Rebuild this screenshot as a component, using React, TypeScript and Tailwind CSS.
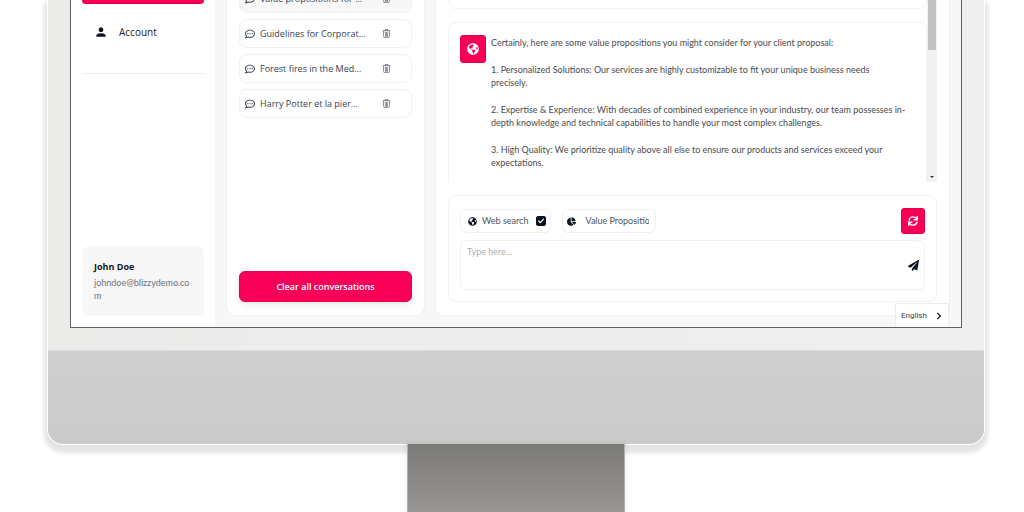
import type { ReactNode } from 'react'
import { BsTrash3 } from 'react-icons/bs'
import { FaChartPie, FaCheck, FaChevronRight, FaGlobeAmericas, FaPaperPlane, FaRegCommentDots, FaSync } from 'react-icons/fa'
import { MdPerson } from 'react-icons/md'

const conversations = [
  { title: 'Value propositions for ...', active: true },
  { title: 'Guidelines for Corporat...', active: false },
  { title: 'Forest fires in the Med...', active: false },
  { title: 'Harry Potter et la pier...', active: false },
]

const answer = [
  'Certainly, here are some value propositions you might consider for your client proposal:',
  '1. Personalized Solutions: Our services are highly customizable to fit your unique business needs precisely.',
  '2. Expertise & Experience: With decades of combined experience in your industry, our team possesses in-depth knowledge and technical capabilities to handle your most complex challenges.',
  '3. High Quality: We prioritize quality above all else to ensure our products and services exceed your expectations.',
]

const Sidebar = () => (
  <aside className="flex w-36 shrink-0 flex-col bg-white px-[11px] pb-[11px]">
    <div className="h-1 rounded-b-md border-b border-[#dc0032] bg-[#f90058]" />
    <a href="#account" className="mt-5 flex h-4 items-center gap-[11px] pl-3 text-[10px] text-[#1f2328]">
      <MdPerson size={14} className="text-[#0b1220]" />
      Account
    </a>
    <hr className="mt-[33px] border-[#ededed]" />
    <div className="mt-auto rounded-lg bg-[#f7f7f7] px-3 py-[14px]">
      <p className="text-[9px] leading-[14px] font-bold text-[#111827]">John Doe</p>
      <p className="mt-[2px] font-['Lato',sans-serif] text-[9px] leading-[13px] break-all text-[#6b7280]">johndoe@blizzydemo.com</p>
    </div>
  </aside>
)

const ConversationList = () => (
  <section className="flex w-[197px] shrink-0 flex-col rounded-b-lg bg-white px-3 pb-[13px] shadow-[0_0_2px_rgba(0,0,0,0.08)]">
    <ul className="-mt-4 flex flex-col gap-[6px]">
      {conversations.map(({ title, active }) => (
        <li
          key={title}
          className={`flex h-[29px] items-center rounded-lg border border-[#f0f0f0] pr-5 pl-[5px] text-[#374151] ${active ? 'bg-[#f7f7f7]' : 'bg-white'}`}
        >
          <button className="flex flex-1 items-center gap-[5px] text-left text-[9px] whitespace-nowrap">
            <FaRegCommentDots size={10} />
            {title}
          </button>
          <button aria-label={`Delete ${title}`}>
            <BsTrash3 size={9} />
          </button>
        </li>
      ))}
    </ul>
    <button className="mt-auto h-[31px] rounded-md border border-[#ee0045] bg-[#f90058] text-[9px] font-semibold text-white shadow-[0_2px_8px_rgba(0,0,0,0.1)]">
      Clear all conversations
    </button>
  </section>
)

const Messages = () => (
  <div className="flex">
    <div className="min-w-0 flex-1">
      <div className="h-[9px] rounded-b-lg border border-t-0 border-[#f2f2f2]" />
      <article className="mt-[13px] flex gap-[5px] rounded-t-lg border border-b-0 border-[#f2f2f2] pt-3 pr-5 pb-[13px] pl-[11px]">
        <div className="flex h-7 w-[26px] shrink-0 items-center justify-center rounded-[3px] border border-[#e6003f] bg-[#f90058] text-white">
          <FaGlobeAmericas size={12} />
        </div>
        <div className="flex flex-col gap-[14px] pt-[1px] font-['Lato',sans-serif] text-[9px] leading-[13px] text-[#4b4b4b]">
          {answer.map((paragraph) => (
            <p key={paragraph}>{paragraph}</p>
          ))}
        </div>
      </article>
    </div>
    <div className="flex w-[10px] flex-col items-center justify-between bg-[#f1f1f1]">
      <div className="h-[50px] w-2 bg-[#c1c1c1]" />
      <div className="mb-1 border-x-2 border-t-2 border-x-transparent border-t-[#333]" />
    </div>
  </div>
)

const Pill = ({ children }: { children: ReactNode }) => (
  <div className="flex h-6 items-center rounded-md border border-[#f0f0f0] text-[9px] text-[#4b5563]">{children}</div>
)

const Composer = () => (
  <form className="mt-[13px] rounded-lg border border-[#f2f2f2] px-[11px] pt-3 pb-[11px] font-['Lato',sans-serif]">
    <div className="flex items-center gap-[11px]">
      <Pill>
        <label htmlFor="web-search" className="flex items-center gap-[5px] pl-[7px]">
          <FaGlobeAmericas size={9} className="text-[#0b1220]" />
          Web search
        </label>
        <span className="relative mr-1 ml-2 flex">
          <input
            id="web-search"
            type="checkbox"
            defaultChecked
            className="peer size-[10px] appearance-none rounded-[2px] border border-[#0b1220] checked:bg-[#0b1220]"
          />
          <FaCheck size={6} className="pointer-events-none absolute inset-0 m-auto hidden text-white peer-checked:block" />
        </span>
      </Pill>
      <Pill>
        <FaChartPie size={9} className="mr-[9px] ml-1 text-[#0b1220]" />
        <select aria-label="Template" className="mr-[6px] w-16 appearance-none bg-transparent outline-none">
          <option>Value Propositions</option>
        </select>
      </Pill>
      <button
        type="button"
        aria-label="Regenerate"
        className="ml-auto flex h-[26px] w-6 items-center justify-center rounded-[3px] border border-[#e6003f] bg-[#f90058] text-white"
      >
        <FaSync size={10} />
      </button>
    </div>
    <div className="mt-[6px] flex h-[50px] rounded-md border border-[#f0f0f0] pl-[6px]">
      <textarea
        aria-label="Message"
        placeholder="Type here..."
        className="min-w-0 flex-1 resize-none pt-1 text-[9px] leading-[13px] outline-none placeholder:text-[#aeaeae]"
      />
      <button type="submit" aria-label="Send" className="pr-[5px] text-[#0b1220]">
        <FaPaperPlane size={11} />
      </button>
    </div>
  </form>
)

const LanguageSwitch = () => (
  <button className="absolute right-3 bottom-0 flex h-6 w-[54px] items-center justify-between border border-b-0 border-[#ececec] bg-white px-[5px] font-['Roboto',sans-serif] text-[8px] text-[#444]">
    English
    <FaChevronRight size={8} className="text-[#111]" />
  </button>
)

const App = () => (
  <div className="flex min-h-screen flex-col overflow-hidden bg-white pr-[39px] pl-[47px] font-['Open_Sans','Noto_Sans',sans-serif]">
    <div className="relative rounded-b-2xl border border-t-0 border-white bg-[#cdcdcd] shadow-[0_5px_4px_3px_rgba(0,0,0,0.11)]">
      <div className="border-b border-[#dcdcdc] bg-linear-to-r from-[#ebebea] to-[#efefef] px-[22px] pb-[22px]">
        <main className="relative flex gap-3 overflow-hidden border border-t-0 border-[#606060] bg-[#f7f7f7] pr-3">
          <Sidebar />
          <div className="mb-3 flex min-w-0 flex-1 gap-3">
            <ConversationList />
            <section className="min-w-0 flex-1 rounded-b-lg bg-white px-3 pb-[13px] shadow-[0_0_2px_rgba(0,0,0,0.08)]">
              <Messages />
              <Composer />
            </section>
          </div>
          <LanguageSwitch />
        </main>
      </div>
      <div className="h-[93px] rounded-b-2xl bg-linear-to-b from-[#cfcfcf] to-[#cbcbca]" />
    </div>
    <div className="relative mx-auto -mt-[1px] w-[218px] flex-1 border-x border-[#b0b0b0] bg-linear-to-b from-[#7b7a79] to-[#979695] shadow-[0_0_3px_2px_rgba(0,0,0,0.05)]" />
  </div>
)

export default App
